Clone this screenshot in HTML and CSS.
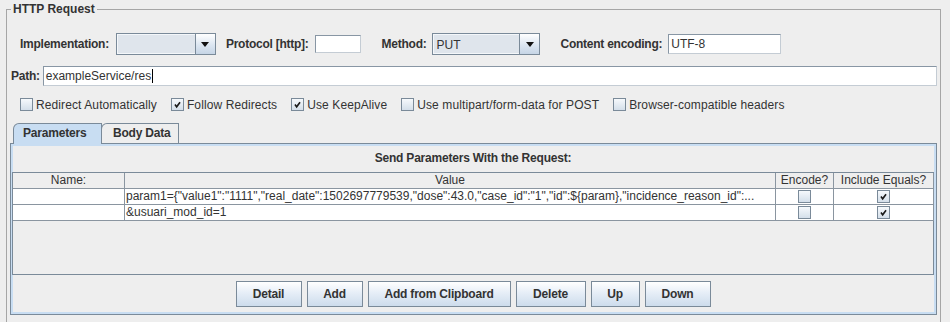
FILE: index.html
```html
<!DOCTYPE html>
<html lang="en">
<head>
    <meta charset="UTF-8">
    <title>HTTP Request</title>
    <link rel="stylesheet" href="styles.css">
</head>
<body>
    <fieldset class="group">
        <legend class="group-title">HTTP Request</legend>

        <!-- implementation / protocol / method / encoding -->
        <div class="row row-top">
            <div class="field field-impl">
                <span class="label">Implementation:</span>
                <div class="combo combo-impl">
                    <span class="combo-value"></span>
                    <span class="combo-btn"><i class="arrow"></i></span>
                </div>
            </div>
            <div class="field field-proto">
                <span class="label">Protocol [http]:</span>
                <div class="text-input input-proto"></div>
            </div>
            <div class="field field-method">
                <span class="label">Method:</span>
                <div class="combo combo-method">
                    <span class="combo-value">PUT</span>
                    <span class="combo-btn"><i class="arrow"></i></span>
                </div>
            </div>
            <div class="field field-enc">
                <span class="label">Content encoding:</span>
                <div class="text-input input-enc">UTF-8</div>
            </div>
        </div>

        <!-- path -->
        <div class="row row-path">
            <span class="label">Path:</span>
            <div class="text-input input-path">exampleService/res<span class="caret"></span></div>
        </div>

        <!-- options -->
        <div class="row row-checks">
            <label class="check"><span class="box"></span>Redirect Automatically</label>
            <label class="check"><span class="box"><svg class="tick" viewBox="0 0 13 13"><path d="M3.5 6.5 L5.5 9.2 L9.5 3.8"/></svg></span>Follow Redirects</label>
            <label class="check"><span class="box"><svg class="tick" viewBox="0 0 13 13"><path d="M3.5 6.5 L5.5 9.2 L9.5 3.8"/></svg></span>Use KeepAlive</label>
            <label class="check"><span class="box"></span>Use multipart/form-data for POST</label>
            <label class="check"><span class="box"></span>Browser-compatible headers</label>
        </div>

        <!-- tabs -->
        <div class="tabs">
            <ul class="tab-strip">
                <li class="tab active">Parameters</li>
                <li class="tab">Body Data</li>
            </ul>
            <div class="tab-body">
                <div class="params-title">Send Parameters With the Request:</div>
                <div class="scroll-pane">
                    <table class="params">
                        <colgroup>
                            <col class="col-name">
                            <col class="col-value">
                            <col class="col-encode">
                            <col class="col-equals">
                        </colgroup>
                        <thead>
                            <tr>
                                <th>Name:</th>
                                <th>Value</th>
                                <th>Encode?</th>
                                <th>Include Equals?</th>
                            </tr>
                        </thead>
                        <tbody>
                            <tr>
                                <td></td>
                                <td class="value">param1={"value1":"1111","real_date":1502697779539,"dose":43.0,"case_id":"1","id":${param},"incidence_reason_id":...</td>
                                <td class="cell-check"><span class="box"></span></td>
                                <td class="cell-check"><span class="box"><svg class="tick" viewBox="0 0 13 13"><path d="M3.5 6.5 L5.5 9.2 L9.5 3.8"/></svg></span></td>
                            </tr>
                            <tr>
                                <td></td>
                                <td class="value">&amp;usuari_mod_id=1</td>
                                <td class="cell-check"><span class="box"></span></td>
                                <td class="cell-check"><span class="box"><svg class="tick" viewBox="0 0 13 13"><path d="M3.5 6.5 L5.5 9.2 L9.5 3.8"/></svg></span></td>
                            </tr>
                        </tbody>
                    </table>
                </div>
                <div class="buttons">
                    <button class="btn btn-detail">Detail</button>
                    <button class="btn btn-add">Add</button>
                    <button class="btn btn-clip">Add from Clipboard</button>
                    <button class="btn btn-delete">Delete</button>
                    <button class="btn btn-up">Up</button>
                    <button class="btn btn-down">Down</button>
                </div>
            </div>
        </div>
    </fieldset>
</body>
</html>
```

FILE: styles.css
```css
/* base */
* {
    margin: 0;
    padding: 0;
    box-sizing: border-box;
}

html,
body {
    height: 322px;
    overflow: hidden;
}

body {
    font-family: "Liberation Sans", Arial, sans-serif;
    font-size: 12px;
    color: #333;
    background: #eeeeee;
}

/* titled group */
.group {
    margin: 2px 9px 0 6px;
    border: 1px solid #a6a6a6;
    min-width: 0;
    height: 340px;
    padding: 0;
}

.group-title {
    margin-left: 4px;
    padding: 0 2px;
    font-weight: bold;
    line-height: 14px;
}

.row {
    display: flex;
    align-items: center;
}

.label {
    font-weight: bold;
    white-space: nowrap;
    letter-spacing: -0.25px;
}

/* first row */
.row-top {
    height: 22px;
    margin-top: 17px;
    padding-left: 13px;
}

.field {
    display: flex;
    align-items: center;
    gap: 6px;
}

.field-impl { gap: 7px; }
.field-proto { margin-left: 10px; }
.field-method { margin-left: 21px; }
.field-enc { margin-left: 20px; }

.combo {
    display: flex;
    height: 22px;
    border: 1px solid #7a8a99;
    background: #dfe5ec;
}

.combo-impl { width: 100px; }
.combo-method { width: 108px; }

.combo-value {
    flex: 1;
    padding-left: 2px;
    line-height: 20px;
    border: 1px solid #f4f7fa;
    border-right: none;
}

.combo-btn {
    width: 20px;
    display: flex;
    align-items: center;
    justify-content: center;
    border-left: 1px solid #7a8a99;
    background: linear-gradient(#ffffff, #dce6f1 55%, #c6d5e6);
}

.arrow {
    width: 0;
    height: 0;
    border-left: 4.5px solid transparent;
    border-right: 4.5px solid transparent;
    border-top: 5px solid #111;
}

.text-input {
    background: #fff;
    border: 1px solid #8896a4;
    border-right-color: #c4ccd4;
    border-bottom-color: #c4ccd4;
    padding-left: 2px;
    white-space: nowrap;
}

.input-proto {
    width: 46px;
    height: 18px;
}

.input-enc {
    width: 113px;
    height: 20px;
    line-height: 18px;
}

/* path row */
.row-path {
    margin-top: 11px;
    padding: 0 3px 0 4px;
    gap: 3px;
}

.input-path {
    flex: 1;
    height: 20px;
    line-height: 18px;
    display: flex;
    align-items: center;
}

.caret {
    width: 1px;
    height: 14px;
    background: #000;
    margin-left: 1px;
}

/* check boxes */
.row-checks {
    margin-top: 10px;
    height: 17px;
    padding-left: 13px;
    gap: 14px;
}

.check {
    display: flex;
    align-items: center;
    gap: 3px;
    white-space: nowrap;
    letter-spacing: 0.1px;
}

.box {
    display: inline-flex;
    width: 13px;
    height: 13px;
    border: 1px solid #7a8a99;
    background: linear-gradient(#f6f9fc, #d4dfea);
}

.tick {
    width: 11px;
    height: 11px;
    fill: none;
    stroke: #1a1a1a;
    stroke-width: 1.9;
}

/* tabs */
.tabs {
    margin: 10px 3px 0;
}

.tab-strip {
    display: flex;
    list-style: none;
    padding-left: 3px;
    height: 20px;
    align-items: flex-end;
}

.tab {
    height: 20px;
    line-height: 18px;
    font-weight: bold;
    letter-spacing: -0.2px;
    border: 1px solid #7a8a99;
    border-bottom: none;
    border-top-left-radius: 6px;
    background: #eeeeee;
}

.tab.active {
    position: relative;
    z-index: 1;
    height: 21px;
    margin-bottom: -1px;
    width: 89px;
    padding-left: 9px;
    background: #c8ddf2;
}

.tab + .tab {
    width: 78px;
    margin-left: -1px;
    padding-left: 11px;
}

.tab-body {
    display: flex;
    flex-direction: column;
    height: 172px;
    border: 1px solid #7a8a99;
    box-shadow: inset 0 0 0 2px #c8ddf2;
    padding: 0 2px 0 1px;
}

.params-title {
    margin-top: 7px;
    line-height: 15px;
    text-align: center;
    font-weight: bold;
    letter-spacing: -0.2px;
}

.scroll-pane {
    margin-top: 6px;
    height: 103px;
    border: 1px solid #7a8a99;
    background: #eeeeee;
}

.params {
    width: 100%;
    table-layout: fixed;
    border-collapse: separate;
    border-spacing: 0;
}

.col-name { width: 112px; }
.col-value { width: 651px; }
.col-encode { width: 58px; }
.col-equals { width: 100px; }

.params th,
.params td {
    height: 16px;
    line-height: 15px;
    padding: 0 1px;
    border-right: 1px solid #8a95a0;
    border-bottom: 1px solid #8a95a0;
    white-space: nowrap;
    overflow: hidden;
}

.params th {
    font-weight: normal;
    text-align: center;
    background: #eeeeee;
}

.params td {
    background: #fff;
}

.params td.value {
    padding-left: 1px;
    text-overflow: clip;
}

.params td.cell-check {
    text-align: center;
    font-size: 0;
}

.cell-check .box {
    vertical-align: top;
    margin-top: 1px;
}

/* buttons */
.buttons {
    display: flex;
    justify-content: center;
    gap: 5px;
    margin-top: 6px;
}

.btn {
    height: 26px;
    font-family: inherit;
    font-size: 12px;
    font-weight: bold;
    letter-spacing: -0.2px;
    color: #333;
    border: 1px solid #7a8a99;
    background: linear-gradient(#ffffff, #e6eef7 45%, #cddcec);
    white-space: nowrap;
}

.btn-detail { width: 66px; }
.btn-add { width: 56px; }
.btn-clip { width: 143px; }
.btn-delete { width: 70px; }
.btn-up { width: 49px; }
.btn-down { width: 66px; }
```
